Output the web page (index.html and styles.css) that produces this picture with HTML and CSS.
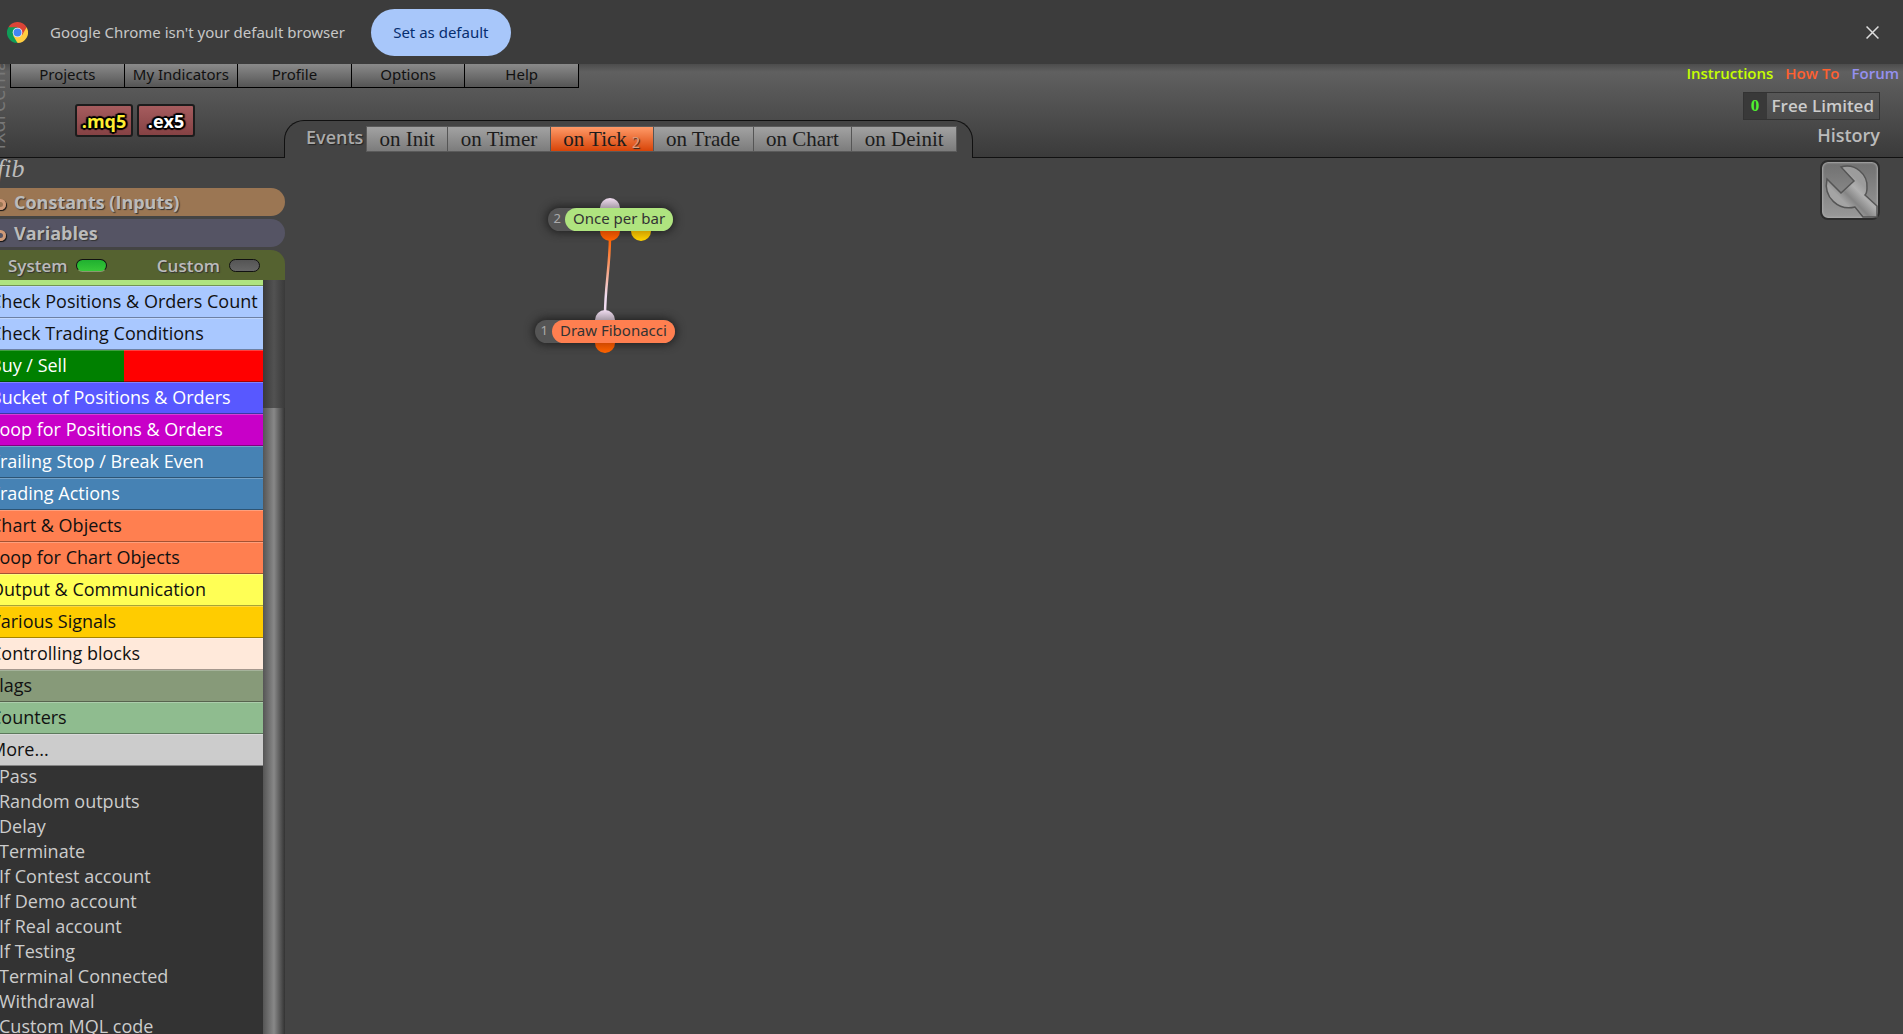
FILE: index.html
```html
<!DOCTYPE html>
<html lang="en">
  <head>
    <meta charset="UTF-8" />
    <meta name="viewport" content="width=device-width, initial-scale=1.0" />
    <title>fib</title>
    <link rel="stylesheet" href="styles.css">
  </head>
  <body>
    <aside class="infobar">
      <svg class="chrome-logo" viewBox="0 0 48 48" aria-hidden="true">
        <path fill="#db4437" d="M24 24 L3.2 12 A24 24 0 0 1 44.8 12 Z" />
        <path fill="#ffcd40" d="M24 24 L44.8 12 A24 24 0 0 1 24 48 Z" />
        <path fill="#0f9d58" d="M24 24 L24 48 A24 24 0 0 1 3.2 12 Z" />
        <path fill="#db4437" d="M24 12 H44.8 L34.4 30 Z" />
        <path fill="#ffcd40" d="M34.4 30 L24 48 L13.6 30 Z" />
        <path fill="#0f9d58" d="M13.6 30 L3.2 12 L24 12 Z" />
        <circle cx="24" cy="24" r="11" fill="#f1f1f1" />
        <circle cx="24" cy="24" r="9" fill="#4285f4" />
      </svg>
      <span>Google Chrome isn't your default browser</span>
      <button class="set-default">Set as default</button>
      <button class="infobar-close" aria-label="Close">
        <svg viewBox="0 0 12 12"><path d="M0.5 0.5 L11.5 11.5 M11.5 0.5 L0.5 11.5" /></svg>
      </button>
    </aside>

    <header>
      <div class="logo">fxdreema</div>
      <div class="header-left">
        <nav class="menu">
          <a href="#projects">Projects</a>
          <a href="#indicators">My Indicators</a>
          <a href="#profile">Profile</a>
          <a href="#options">Options</a>
          <a href="#help">Help</a>
        </nav>
        <div class="downloads">
          <button class="mq5">.mq5</button>
          <button class="ex5">.ex5</button>
        </div>
      </div>
      <nav class="events">
        <span class="events-title">Events</span>
        <div class="tabs">
          <button>on Init</button>
          <button>on Timer</button>
          <button class="active">on Tick <sub>2</sub></button>
          <button>on Trade</button>
          <button>on Chart</button>
          <button>on Deinit</button>
        </div>
      </nav>
      <div class="header-right">
        <nav class="links">
          <a href="#instructions" class="instructions">Instructions</a>
          <a href="#howto" class="howto">How To</a>
          <a href="#forum" class="forum">Forum</a>
        </nav>
        <a href="#plan" class="plan"><span class="count">0</span><span class="plan-name">Free Limited</span></a>
        <a href="#history" class="history">History</a>
      </div>
    </header>

    <main>
      <section class="sidebar">
        <h1>fib</h1>
        <button class="bar constants">Constants (Inputs)</button>
        <button class="bar variables">Variables</button>
        <div class="bar blocks-bar">
          <label>System <input type="checkbox" class="switch" checked></label>
          <label>Custom <input type="checkbox" class="switch"></label>
        </div>
        <div class="blocks">
          <div class="list">
            <a href="#" class="cat green"></a>
            <a href="#" class="cat blue">Check Positions &amp; Orders Count</a>
            <a href="#" class="cat blue">Check Trading Conditions</a>
            <a href="#" class="cat buysell">Buy / Sell</a>
            <a href="#" class="cat bucket">Bucket of Positions &amp; Orders</a>
            <a href="#" class="cat loop">Loop for Positions &amp; Orders</a>
            <a href="#" class="cat steel">Trailing Stop / Break Even</a>
            <a href="#" class="cat steel">Trading Actions</a>
            <a href="#" class="cat coral">Chart &amp; Objects</a>
            <a href="#" class="cat coral">Loop for Chart Objects</a>
            <a href="#" class="cat yellow">Output &amp; Communication</a>
            <a href="#" class="cat gold">Various Signals</a>
            <a href="#" class="cat cream">Controlling blocks</a>
            <a href="#" class="cat flags">Flags</a>
            <a href="#" class="cat counters">Counters</a>
            <a href="#" class="cat more">More...</a>
            <ul>
              <li>Pass</li>
              <li>Random outputs</li>
              <li>Delay</li>
              <li>Terminate</li>
              <li>If Contest account</li>
              <li>If Demo account</li>
              <li>If Real account</li>
              <li>If Testing</li>
              <li>Terminal Connected</li>
              <li>Withdrawal</li>
              <li>Custom MQL code</li>
            </ul>
          </div>
          <div class="scrollbar"><div class="thumb"></div></div>
        </div>
      </section>

      <section class="canvas">
        <svg class="wire" viewBox="0 0 12 80" aria-hidden="true">
          <defs>
            <linearGradient id="wire" x1="0" y1="0" x2="0" y2="1">
              <stop offset="0.1" stop-color="#ff6a10" />
              <stop offset="0.75" stop-color="#f0dcf0" />
            </linearGradient>
          </defs>
          <path d="M8 0 C8 30 3 50 3 80" fill="none" stroke="url(#wire)" stroke-width="2.5" />
        </svg>
        <div class="node once">
          <span class="pin in"></span><span class="pin out"></span><span class="pin alt"></span>
          <span class="num">2</span><span class="name">Once per bar</span>
        </div>
        <div class="node draw">
          <span class="pin in"></span><span class="pin out"></span>
          <span class="num">1</span><span class="name">Draw Fibonacci</span>
        </div>
        <button class="tools" aria-label="Tools">
          <svg viewBox="0 0 56 56">
            <defs>
              <linearGradient id="metal" gradientUnits="userSpaceOnUse" x1="30" y1="48" x2="48" y2="30">
                <stop offset="0" stop-color="#a4a4a4" />
                <stop offset="0.3" stop-color="#858585" />
                <stop offset="0.7" stop-color="#b0b0b0" />
                <stop offset="1" stop-color="#9c9c9c" />
              </linearGradient>
            </defs>
            <path d="M5 17 L19 31 L32 19 L19 5 C33 1 46 12 45 26 Q45 31 43 33 L55 44 V55 H41 L33 45 C17 49 1 36 5 17 Z" fill="url(#metal)" stroke="#555" stroke-width="1.5" />
          </svg>
        </button>
      </section>
    </main>
  </body>
</html>
```
FILE: styles.css
```css
* {
  margin: 0;
  padding: 0;
  box-sizing: border-box;
}

body {
  height: 100vh;
  display: flex;
  flex-direction: column;
  overflow: hidden;
  background-color: #444;
  color: #ccc;
  font-family: "Open Sans", "Noto Sans", sans-serif;
  font-size: 18px;
}

a {
  color: inherit;
  text-decoration: none;
}

button {
  border: none;
  background: none;
  font: inherit;
  color: inherit;
  cursor: pointer;
}

/* ------ */
/* Browser notice */
.infobar {
  flex: none;
  display: flex;
  align-items: center;
  height: 64px;
  padding: 0 24px 0 7px;
  background-color: #3c3c3c;
  color: #c7c7c7;
  font-family: "Noto Sans", sans-serif;
  font-size: 15px;
}

.chrome-logo {
  width: 21px;
  height: 21px;
  margin-right: 22px;
}

.set-default {
  width: 140px;
  height: 47px;
  margin-left: 26px;
  border-radius: 24px;
  background-color: #a8c7fa;
  color: #062e6f;
}

.infobar-close {
  width: 13px;
  height: 13px;
  margin-left: auto;
}

.infobar-close svg {
  display: block;
  stroke: #ddd;
  stroke-width: 1.4;
}

/* ------ */
/* Header */
header {
  flex: none;
  display: flex;
  height: 94px;
  position: relative;
  overflow: hidden;
  background: linear-gradient(#4c4c4c, #606060 8px, #3a3a3a);
}

.logo {
  position: absolute;
  right: 100%;
  bottom: 8px;
  margin-right: -10px;
  writing-mode: vertical-rl;
  transform: rotate(180deg);
  color: #777;
  font-size: 20px;
  line-height: 24px;
}

.header-left {
  width: 285px;
  border-bottom: 1px solid #111;
}

.menu {
  display: flex;
  width: 569px;
  height: 24px;
  margin-left: 10px;
  border: 1px solid #000;
  border-top: none;
}

.menu a {
  flex: 1;
  background: linear-gradient(#8a8a8a, #555);
  color: #111;
  font-family: "Noto Sans", sans-serif;
  font-size: 15px;
  line-height: 20px;
  text-align: center;
}

.menu a + a {
  border-left: 1px solid #000;
}

.downloads {
  display: flex;
  gap: 4px;
  margin: 16px 0 0 75px;
}

.downloads button {
  width: 58px;
  height: 33px;
  border: 2px solid #1c1c1c;
  border-radius: 3px;
  background: linear-gradient(#a65c5e, #854244);
  font-family: "Open Sans", sans-serif;
  font-size: 18px;
  font-weight: bold;
  line-height: 26px;
  text-shadow: 2px 1px 1px #000, -2px -1px 1px #000, 2px -1px 1px #000, -2px 1px 1px #000, 0 2px 1px #000, 0 -2px 1px #000;
}

.downloads .mq5 {
  color: #ffee32;
}

.downloads .ex5 {
  color: #fff;
}

.events {
  display: flex;
  align-self: flex-end;
  width: 689px;
  height: 38px;
  margin-left: -1px;
  padding: 5px 0 0 21px;
  border: 1px solid #111;
  border-bottom: none;
  border-radius: 20px 20px 0 0;
  background-color: #444;
}

.events-title {
  width: 60px;
  color: #aaa;
  font-weight: 600;
  line-height: 22px;
  text-shadow: 1px 1px 1px #222;
}

.tabs {
  display: flex;
  width: 591px;
  height: 26px;
  border: 1px solid #5a5a5a;
}

.tabs button {
  flex: 1 0 auto;
  background: linear-gradient(#a2a2a2, #7c7c7c);
  color: #1c1c1c;
  font-family: Georgia, "Liberation Serif", serif;
  font-size: 21px;
  line-height: 23px;
}

.tabs button + button {
  border-left: 1px solid #555;
}

.tabs .active {
  background: linear-gradient(#ff9a68, #d84408);
}

.tabs sub {
  color: #e0a080;
  font-size: 16px;
  line-height: 0;
  vertical-align: -2px;
  text-shadow: 1px 1px 1px #222;
}

.header-right {
  flex: 1;
  display: flex;
  flex-direction: column;
  align-items: flex-end;
  padding-right: 23px;
  border-bottom: 1px solid #111;
}

.links {
  display: flex;
  gap: 12px;
  margin-right: -19px;
  font-size: 15px;
  font-weight: 600;
  line-height: 19px;
}

.instructions {
  color: #c6ff00;
}

.howto {
  color: #ff6030;
}

.forum {
  color: #9590f0;
}

.plan {
  display: flex;
  margin-top: 9px;
  border: 1px solid #333;
  font-size: 17px;
  font-weight: 600;
  line-height: 26px;
}

.count {
  width: 23px;
  background-color: #393939;
  color: #50f030;
  font-family: "Liberation Serif", serif;
  font-weight: bold;
  text-align: center;
}

.plan-name {
  padding: 0 5px;
}

.history {
  color: #bbb;
  font-weight: 600;
  line-height: 30px;
}

/* ------ */
/* Sidebar */
main {
  flex: 1;
  display: flex;
  min-height: 0;
}

.sidebar {
  display: flex;
  flex-direction: column;
  width: 285px;
}

h1 {
  height: 30px;
  color: #bbb;
  font-family: "Liberation Serif", serif;
  font-size: 26px;
  font-style: italic;
  font-weight: normal;
  line-height: 22px;
  text-indent: -3px;
}

.bar {
  flex: none;
  height: 28px;
  margin-bottom: 3px;
  border-radius: 0 14px 14px 0;
  color: #bbb;
  font-weight: bold;
  line-height: 27px;
  text-align: left;
  text-shadow: 1px 1px 1px #333;
}

button.bar::before {
  content: "";
  box-sizing: border-box;
  display: inline-block;
  width: 11px;
  height: 11px;
  margin: 0 8px 0 -5px;
  border: 3px solid #d09a78;
  border-radius: 50%;
  box-shadow: 1px 1px 1px #111;
  vertical-align: -1px;
}

.constants {
  background-color: #9b7653;
}

.variables {
  background-color: #555464;
}

.blocks-bar {
  display: flex;
  justify-content: space-between;
  height: 30px;
  margin: 0;
  padding: 0 25px 0 8px;
  border-radius: 0 14px 0 0;
  background-color: #556230;
  font-size: 17px;
  font-weight: 600;
}

.bar label {
  display: flex;
  align-items: center;
  gap: 9px;
}

.switch {
  appearance: none;
  width: 31px;
  height: 13px;
  border: 1px solid #111;
  border-radius: 7px;
  background: linear-gradient(#555, #666);
}

.switch:checked {
  border-bottom-color: #8a9a70;
  background: linear-gradient(#20b030, #38c838);
}

.blocks {
  flex: 1;
  display: flex;
  min-height: 0;
}

.list {
  width: 263px;
  overflow: hidden;
  background-color: #333;
}

.cat {
  display: block;
  height: 32px;
  border-top: 1px solid rgba(255, 255, 255, 0.25);
  border-bottom: 1px solid rgba(0, 0, 0, 0.35);
  color: #111;
  line-height: 29px;
  text-indent: -10px;
  white-space: nowrap;
}

.green {
  height: 6px;
  border-top: none;
  background-color: #afe47f;
}

.blue {
  background-color: #a9c8ff;
}

.buysell {
  background: linear-gradient(90deg, #008000 124px, #f00 124px);
}

.bucket {
  background-color: #5858ff;
}

.loop {
  background-color: #c800c8;
}

.steel {
  background-color: #4682b4;
}

.buysell,
.bucket,
.loop,
.steel {
  color: #fff;
  font-weight: 500;
}

.coral {
  background-color: #ff7f50;
}

.yellow {
  background-color: #ffff55;
}

.gold {
  background-color: #fc0;
}

.cream {
  background-color: #ffe9da;
}

.flags {
  background-color: #879a79;
}

.counters {
  background-color: #8fbc8f;
}

.more {
  background-color: #ccc;
}

.list ul {
  list-style: none;
}

.list li {
  height: 25px;
  line-height: 21px;
  text-indent: -1px;
}

.scrollbar {
  width: 22px;
  padding-top: 128px;
  background: linear-gradient(90deg, #3a3a3a, #525252 50%, #3a3a3a);
}

.thumb {
  height: 100%;
  background: linear-gradient(90deg, #555, #888 50%, #333);
}

/* ------ */
/* Diagram */
.canvas {
  flex: 1;
  position: relative;
}

.wire {
  position: absolute;
  left: 317px;
  top: 78px;
  width: 12px;
  height: 80px;
}

.node {
  position: absolute;
  display: flex;
  height: 23px;
  border-radius: 12px;
  background-color: #555;
  box-shadow: 0 0 8px 2px #222;
  font-family: "Noto Sans", sans-serif;
  font-size: 15px;
  line-height: 21px;
}

.once {
  left: 263px;
  top: 50px;
}

.draw {
  left: 250px;
  top: 162px;
}

.num {
  width: 17px;
  color: #aaa;
  font-size: 13px;
  text-align: right;
  padding-right: 4px;
}

.name {
  padding: 0 8px;
  border-radius: 12px;
  background-color: #afe47f;
  color: #333;
}

.draw .name {
  background-color: #ff7f50;
}

.pin {
  position: absolute;
  width: 20px;
  height: 10px;
  border-radius: 0 0 10px 10px;
  background: linear-gradient(#d04800, #ff6400);
}

.once .pin {
  left: 52px;
}

.draw .pin {
  left: 60px;
}

.pin.in {
  bottom: 100%;
  border-radius: 10px 10px 0 0;
  background: linear-gradient(#f0dcf0, #a89ca8);
}

.pin.out,
.pin.alt {
  top: 100%;
}

.once .pin.alt {
  left: 83px;
  background: linear-gradient(#d0a000, #ffd400);
}

.tools {
  position: absolute;
  right: 23px;
  top: 2px;
  width: 60px;
  height: 60px;
  border: 2px solid #2c2c2c;
  border-radius: 8px;
  background: linear-gradient(#707070, #999);
  box-shadow: inset 0 0 2px 1px #aaa;
}

.tools svg {
  display: block;
}
```
